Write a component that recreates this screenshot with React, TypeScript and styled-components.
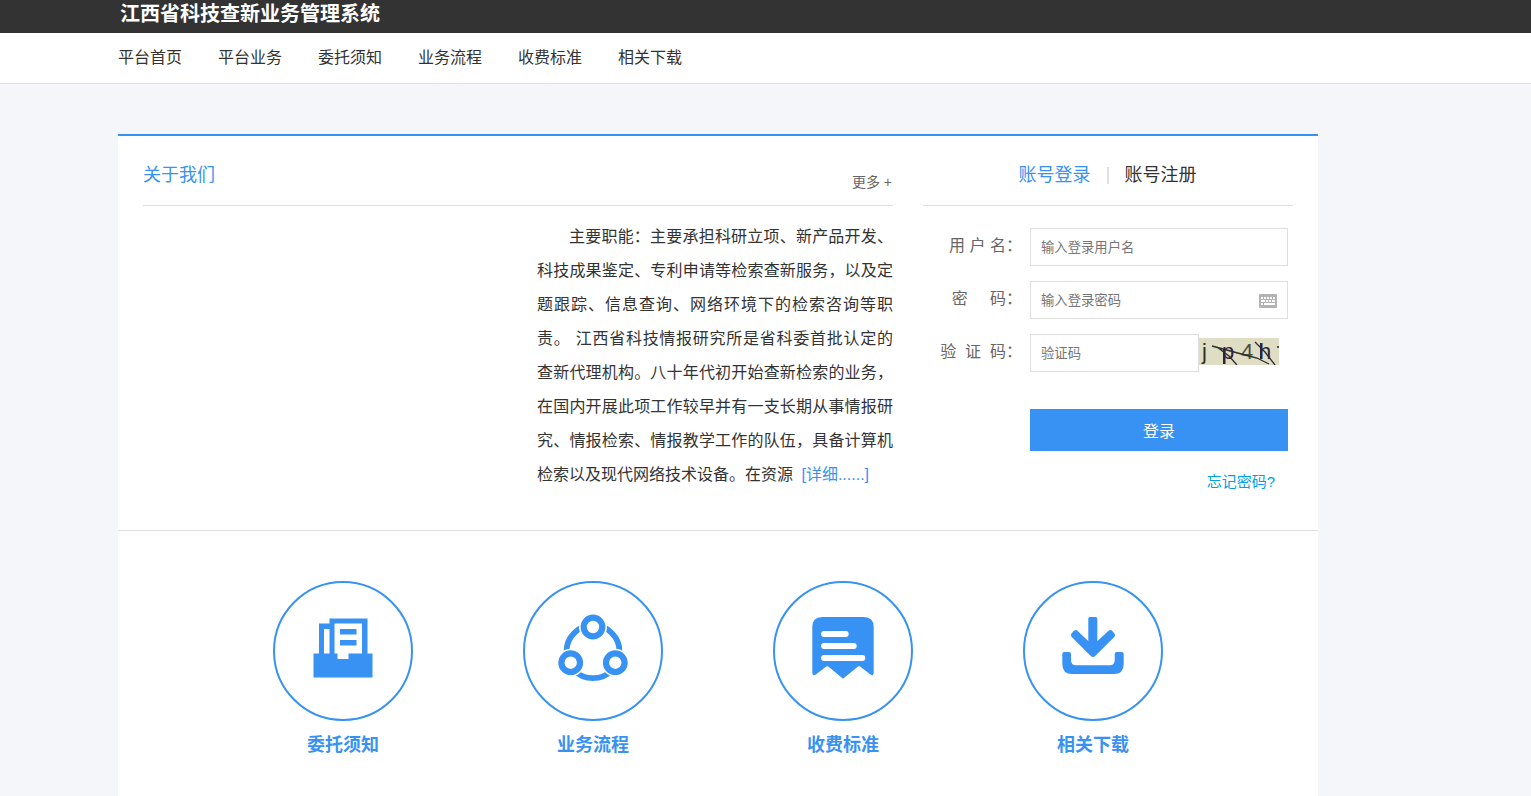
import React from 'react';
import styled, { createGlobalStyle } from 'styled-components';

const BLUE = '#3892f3';
const LINE = '#dfdfdf';

const GlobalStyle = createGlobalStyle`
  * {
    box-sizing: border-box;
  }
  body {
    margin: 0;
    background: #f4f6fa;
    color: #333;
    font-family: 'Liberation Sans', 'Noto Sans CJK SC', sans-serif;
    font-size: 16px;
  }
  a {
    color: inherit;
    text-decoration: none;
  }
  input, button {
    font-family: inherit;
  }
`;

const Page = styled.div`
  display: flex;
  flex-direction: column;
  min-height: 100vh;
`;

const TopBar = styled.header`
  padding: 0 120px;
  background: #333;
  color: #fff;
`;

const SiteTitle = styled.h1`
  margin: 0;
  padding-bottom: 5px;
  font-size: 20px;
  line-height: 28px;
  font-weight: bold;
`;

const NavBar = styled.nav`
  display: flex;
  gap: 36px;
  padding: 0 118px;
  background: #fff;
  border-bottom: 1px solid ${LINE};
`;

const NavLink = styled.a`
  line-height: 50px;
`;

const Panel = styled.main`
  flex: 1;
  width: 100%;
  max-width: 1318px;
  margin-top: 50px;
  padding-left: 118px;
  display: flex;
`;

const PanelBody = styled.div`
  flex: 1;
  background: #fff;
  border-top: 2px solid ${BLUE};
`;

const Intro = styled.div`
  display: grid;
  grid-template-columns: minmax(0, 1fr) 370px;
  column-gap: 30px;
  padding: 0 25px 37px;
  border-bottom: 1px solid ${LINE};
`;

const SectionHead = styled.div<{ $center?: boolean }>`
  display: flex;
  justify-content: ${(p) => (p.$center ? 'center' : 'space-between')};
  gap: 16px;
  height: 70px;
  padding: 20px 1px 0 0;
  border-bottom: 1px solid ${LINE};
  font-size: 18px;
  line-height: 38px;
`;

const SectionTitle = styled.h2`
  margin: 0;
  font-size: 18px;
  font-weight: normal;
  color: ${BLUE};
`;

const MoreLink = styled.a`
  padding-top: 7px;
  font-size: 14px;
  color: #666;
`;

const Tab = styled.a<{ $active?: boolean }>`
  color: ${(p) => (p.$active ? BLUE : '#333')};
`;

const TabDivider = styled.span`
  width: 2px;
  height: 17px;
  margin-top: 11px;
  background: #dfdfe4;
`;

const AboutText = styled.p`
  width: 356px;
  margin: 14px 0 0 auto;
  line-height: 34px;
  text-indent: 2em;
  text-align: justify;
`;

const DetailLink = styled.a`
  margin-left: 4px;
  color: ${BLUE};
`;

const LoginForm = styled.form`
  display: flex;
  flex-direction: column;
  gap: 15px;
  padding: 22px 5px 0 0;
`;

const Field = styled.div`
  position: relative;
  display: flex;
`;

const FieldLabel = styled.label`
  width: 99px;
  margin-right: 8px;
  line-height: 36px;
  text-align: right;
  white-space: pre;
  color: #666;
`;

const TextInput = styled.input<{ $short?: boolean }>`
  flex: ${(p) => (p.$short ? '0 0 169px' : '1')};
  min-width: 0;
  height: 38px;
  padding: 0 10px;
  border: 1px solid ${LINE};
  border-radius: 0;
  outline: none;
  background: #fff;
  color: #333;
  &::placeholder {
    color: #757575;
  }
`;

const KeyboardIcon = styled.svg`
  position: absolute;
  right: 11px;
  top: 13px;
`;

const Captcha = styled.svg`
  margin-top: 4px;
`;

const Actions = styled.div`
  display: flex;
  flex-direction: column;
  margin: 22px 0 0 107px;
`;

const SubmitButton = styled.button`
  height: 42px;
  border: 0;
  background: ${BLUE};
  color: #fff;
  font-size: 16px;
`;

const ForgotLink = styled.a`
  align-self: flex-end;
  margin: 20px 13px 0 0;
  font-size: 15px;
  line-height: 22px;
  color: #00a0e9;
`;

const Shortcuts = styled.div`
  display: grid;
  grid-template-columns: repeat(4, 250px);
  justify-content: center;
  padding: 50px 0 36px;
`;

const Shortcut = styled.a`
  display: flex;
  flex-direction: column;
  align-items: center;
  gap: 12px;
  font-size: 18px;
  line-height: 24px;
  font-weight: bold;
  color: ${BLUE};
`;

const navItems = ['平台首页', '平台业务', '委托须知', '业务流程', '收费标准', '相关下载'];

const Ring = () => <circle cx="70" cy="70" r="69" fill="none" stroke={BLUE} strokeWidth="2" />;

const NoticeIcon = () => (
  <svg width="140" height="140" viewBox="0 0 140 140" aria-hidden="true">
    <Ring />
    <path
      fill={BLUE}
      fillRule="evenodd"
      d="M40.5 72.5H46V42.5H56.5V37.5H94.5V72.5H99.5V96.5H40.5ZM51 48V72.5H56.5V48ZM61.5 42.5V72.5H64.5V78H75.5V72.5H89V42.5ZM67 48H83.5V53.5H67ZM67 59H83.5V64.5H67Z"
    />
  </svg>
);

const FlowIcon = () => (
  <svg width="140" height="140" viewBox="0 0 140 140" aria-hidden="true">
    <Ring />
    <circle cx="70" cy="70.7" r="26.5" fill="none" stroke={BLUE} strokeWidth="5.8" />
    {[[70, 46], [47.7, 81.7], [92.3, 81.7]].map(([x, y]) => (
      <g key={x}>
        <circle cx={x} cy={y} r="14" fill="#fff" />
        <circle cx={x} cy={y} r="9.3" fill="none" stroke={BLUE} strokeWidth="6.2" />
      </g>
    ))}
  </svg>
);

const FeeIcon = () => (
  <svg width="140" height="140" viewBox="0 0 140 140" aria-hidden="true">
    <Ring />
    <path
      fill={BLUE}
      d="M49.3 36H90.7Q100.7 36 100.7 46V91Q100.7 95.5 97.5 93.6L87 85.6Q86 84.8 85 85.6L70 97.7L55.3 85.6Q54.3 84.8 53.3 85.6L42.8 93.6Q39.3 95.5 39.3 91V46Q39.3 36 49.3 36Z"
    />
    <path stroke="#fff" strokeWidth="5.8" strokeLinecap="round" d="M51 53H72.8M51 65H80.8M51 77H89.4" />
  </svg>
);

const DownloadIcon = () => (
  <svg width="140" height="140" viewBox="0 0 140 140" aria-hidden="true">
    <Ring />
    <path
      fill={BLUE}
      stroke={BLUE}
      strokeWidth="3"
      strokeLinejoin="round"
      d="M66.8 37.5H72.8V63.6L86.6 50.8Q87.4 50.2 88.2 51L90.3 53.4Q90.9 54.2 90.2 55L71.4 73.6Q70 75 68.6 73.6L49.8 55Q49.1 54.2 49.7 53.4L51.8 51Q52.6 50.2 53.4 50.8L66.8 63.6Z"
    />
    <path
      fill={BLUE}
      d="M41.3 71H46Q48 71 48 73V79.3Q48 84.3 53 84.3H86.7Q91.7 84.3 91.7 79.3V73Q91.7 71 93.7 71H98.7Q100.7 71 100.7 73V83Q100.7 93 90.7 93H49.3Q39.3 93 39.3 83V73Q39.3 71 41.3 71Z"
    />
  </svg>
);

const shortcuts = [
  { label: '委托须知', Icon: NoticeIcon },
  { label: '业务流程', Icon: FlowIcon },
  { label: '收费标准', Icon: FeeIcon },
  { label: '相关下载', Icon: DownloadIcon },
];

export default function App() {
  return (
    <Page>
      <GlobalStyle />
      <TopBar>
        <SiteTitle>江西省科技查新业务管理系统</SiteTitle>
      </TopBar>
      <NavBar>
        {navItems.map((item) => (
          <NavLink key={item} href="#">{item}</NavLink>
        ))}
      </NavBar>
      <Panel>
        <PanelBody>
          <Intro>
            <section>
              <SectionHead>
                <SectionTitle>关于我们</SectionTitle>
                <MoreLink href="#">更多 +</MoreLink>
              </SectionHead>
              <AboutText>
                主要职能：主要承担科研立项、新产品开发、科技成果鉴定、专利申请等检索查新服务，以及定题跟踪、信息查询、网络环境下的检索咨询等职责。 江西省科技情报研究所是省科委首批认定的查新代理机构。八十年代初开始查新检索的业务，在国内开展此项工作较早并有一支长期从事情报研究、情报检索、情报教学工作的队伍，具备计算机检索以及现代网络技术设备。在资源{' '}
                <DetailLink href="#">[详细......]</DetailLink>
              </AboutText>
            </section>
            <section>
              <SectionHead $center>
                <Tab href="#" $active>账号登录</Tab>
                <TabDivider />
                <Tab href="#">账号注册</Tab>
              </SectionHead>
              <LoginForm onSubmit={(e) => e.preventDefault()}>
                <Field>
                  <FieldLabel htmlFor="username">用 户 名：</FieldLabel>
                  <TextInput id="username" type="text" placeholder="输入登录用户名" />
                </Field>
                <Field>
                  <FieldLabel htmlFor="password">{'密     码：'}</FieldLabel>
                  <TextInput id="password" type="password" placeholder="输入登录密码" />
                  <KeyboardIcon width="18" height="14" viewBox="0 0 18 14" aria-hidden="true">
                    <rect width="18" height="14" rx="1" fill="#b3b3b3" />
                    <path
                      stroke="#fff"
                      strokeWidth="2"
                      d="M2 4h2M5 4h2M8 4h2M11 4h2M14 4h2M2 7h4M7 7h2M10 7h2M13 7h3M2 10h2M5 10h11"
                    />
                  </KeyboardIcon>
                </Field>
                <Field>
                  <FieldLabel htmlFor="captcha">{'验  证  码：'}</FieldLabel>
                  <TextInput id="captcha" type="text" placeholder="验证码" $short />
                  <Captcha width="80" height="27" viewBox="0 0 80 27">
                    <rect width="80" height="27" fill="#dfddc4" />
                    <g fontFamily="Liberation Sans, sans-serif" fontSize="22">
                      <text x="3" y="21" fill="#33332a">j</text>
                      <text x="23" y="21" fill="#35203a">p</text>
                      <text x="42" y="21" fill="#4a5038">4</text>
                      <text x="60" y="21" fill="#332838">h</text>
                    </g>
                    <path
                      fill="none"
                      stroke="#2b2d2a"
                      strokeWidth="1.3"
                      d="M13 8L24 11L46 17L58 20L70 26M18 9L30 18L38 27M56 4L66 14L76 27M78 9H80"
                    />
                    <path stroke="#35203a" strokeWidth="2" d="M25 11V26M62 5V21" />
                  </Captcha>
                </Field>
                <Actions>
                  <SubmitButton type="submit">登录</SubmitButton>
                  <ForgotLink href="#">忘记密码?</ForgotLink>
                </Actions>
              </LoginForm>
            </section>
          </Intro>
          <Shortcuts>
            {shortcuts.map(({ label, Icon }) => (
              <Shortcut key={label} href="#">
                <Icon />
                {label}
              </Shortcut>
            ))}
          </Shortcuts>
        </PanelBody>
      </Panel>
    </Page>
  );
}
